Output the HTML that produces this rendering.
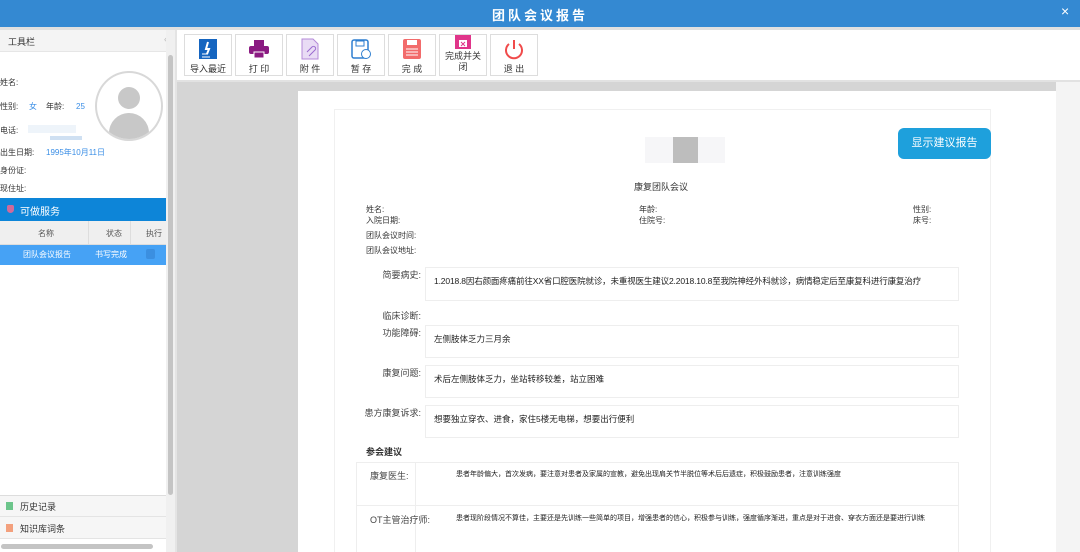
<!DOCTYPE html>
<html><head><meta charset="utf-8"><style>
*{margin:0;padding:0;box-sizing:border-box}
body{width:1080px;height:552px;overflow:hidden;position:relative;background:#fff;font-family:"Liberation Sans","Noto Sans CJK SC",sans-serif;color:#333}
.a{position:absolute;white-space:nowrap}
.s8{font-size:8px}.s9{font-size:9px}.s10{font-size:10px}
.btn{position:absolute;top:34px;width:48px;height:42px;border:1px solid #ddd;background:#fff;font-size:9px;text-align:center;color:#333}
.btn svg{display:block;margin:3px auto 2px}
.box{position:absolute;left:425px;width:534px;border:1px solid #eee;background:#fff;font-size:8.5px;color:#222;padding:7px 8px;white-space:nowrap;overflow:hidden}
.lbl{position:absolute;font-size:9px;color:#444;text-align:right;width:70px}
</style></head><body>
<div class="a" style="left:0;top:0;width:1080px;height:27px;background:#3489d2"></div>
<div class="a" style="left:0;top:5px;width:1080px;text-align:center;color:#fff;font-size:13px;font-weight:bold;letter-spacing:3px">团队会议报告</div>
<div class="a" style="left:1061px;top:3px;color:#fff;font-size:14px">×</div>
<div class="a" style="left:0;top:27px;width:1080px;height:3px;background:#e0e0e0"></div>

<!-- left panel -->
<div class="a" style="left:0;top:30px;width:166px;height:22px;background:#f4f4f4;border-bottom:1px solid #e6e6e6"></div>
<div class="a s9" style="left:8px;top:35px">工具栏</div>
<div class="a s9" style="left:164px;top:34px;color:#bbb">«</div>
<div class="a" style="left:166px;top:30px;width:12px;height:522px;background:#f0f0f0"></div>
<div class="a" style="left:168px;top:55px;width:5px;height:440px;background:#c4c4c4;border-radius:3px"></div>
<div class="a" style="left:175px;top:30px;width:2px;height:522px;background:#e4e4e4"></div>
<div class="a s8" style="left:0;top:77px">姓名:</div>
<div class="a s8" style="left:0;top:101px">性别:</div>
<div class="a s8" style="left:29px;top:101px;color:#3a8ee6">女</div>
<div class="a s8" style="left:46px;top:101px">年龄:</div>
<div class="a s8" style="left:76px;top:102px;color:#3a8ee6">25</div>
<div class="a s8" style="left:0;top:125px">电话:</div>
<div class="a" style="left:28px;top:125px;width:48px;height:8px;background:#eef4fa"></div>
<div class="a" style="left:50px;top:136px;width:32px;height:4px;background:#cfe0f2"></div>
<div class="a s8" style="left:0;top:147px">出生日期:</div>
<div class="a s8" style="left:46px;top:147px;color:#3a8ee6">1995年10月11日</div>
<div class="a s8" style="left:0;top:165px">身份证:</div>
<div class="a s8" style="left:0;top:183px">现住址:</div>
<div class="a" style="left:95px;top:71px;width:68px;height:70px;border-radius:50%;border:2px solid #d8d8d8;overflow:hidden;background:#fff">
 <div class="a" style="left:21px;top:14px;width:22px;height:22px;border-radius:50%;background:#c8c8c8"></div>
 <div class="a" style="left:12px;top:40px;width:40px;height:40px;border-radius:50%;background:#c8c8c8"></div>
</div>
<div class="a" style="left:0;top:198px;width:166px;height:23px;background:#0d85d8"></div>
<div class="a" style="left:7px;top:205px;width:7px;height:8px;background:#d06a9a;border-radius:2px 2px 4px 4px"></div>
<div class="a" style="left:20px;top:203px;color:#fff;font-size:10px">可做服务</div>
<div class="a" style="left:0;top:221px;width:166px;height:24px;background:#efefef;border-bottom:1px solid #ddd"></div>
<div class="a s8" style="left:38px;top:228px;color:#555">名称</div>
<div class="a s8" style="left:106px;top:228px;color:#555">状态</div>
<div class="a s8" style="left:146px;top:228px;color:#555">执行</div>
<div class="a" style="left:88px;top:221px;width:1px;height:44px;background:#ddd"></div>
<div class="a" style="left:130px;top:221px;width:1px;height:44px;background:#ddd"></div>
<div class="a" style="left:0;top:245px;width:166px;height:20px;background:#46a2f5"></div>
<div class="a s8" style="left:23px;top:249px;color:#fff">团队会议报告</div>
<div class="a s8" style="left:95px;top:249px;color:#fff">书写完成</div>
<div class="a" style="left:146px;top:249px;width:9px;height:10px;background:#3b8fe0;border-radius:2px"></div>
<div class="a" style="left:0;top:495px;width:166px;height:22px;background:#f6f6f6;border-top:1px solid #ddd;border-bottom:1px solid #e4e4e4"></div>
<div class="a" style="left:6px;top:502px;width:7px;height:8px;background:#6cc58b"></div>
<div class="a s9" style="left:20px;top:500px">历史记录</div>
<div class="a" style="left:0;top:517px;width:166px;height:22px;background:#f6f6f6;border-bottom:1px solid #e4e4e4"></div>
<div class="a" style="left:6px;top:524px;width:7px;height:8px;background:#f3a07d"></div>
<div class="a s9" style="left:20px;top:522px">知识库词条</div>
<div class="a" style="left:1px;top:544px;width:152px;height:5px;background:#c4c4c4;border-radius:3px"></div>

<!-- toolbar -->
<div class="a" style="left:177px;top:30px;width:903px;height:52px;background:#fff;border-bottom:2px solid #e2e2e2"></div>
<div class="btn" style="left:184px"><svg width="20" height="22"><rect x="1" y="1" width="18" height="20" fill="#1565c0"/><path d="M10 4 L8 11 H11 L9 16" stroke="#fff" stroke-width="2" fill="none"/><path d="M4 16h6M4 19h8" stroke="#fff"/></svg>导入最近</div>
<div class="btn" style="left:235px"><svg width="22" height="22"><rect x="6" y="2" width="10" height="6" fill="#8b1b82"/><rect x="1" y="8" width="20" height="8" rx="2" fill="#8b1b82"/><rect x="6" y="14" width="10" height="6" fill="#8b1b82" stroke="#fff"/></svg>打 印</div>
<div class="btn" style="left:286px"><svg width="20" height="22"><path d="M2 1h11l5 5v15H2z" fill="#e9dcf5" stroke="#b48ad8"/><path d="M7 14l5-5a2 2 0 013 3l-6 6" stroke="#9b6bd0" fill="none"/></svg>附 件</div>
<div class="btn" style="left:337px"><svg width="22" height="22"><rect x="2" y="2" width="16" height="18" rx="2" fill="none" stroke="#2f7fd0" stroke-width="1.5"/><rect x="6" y="3" width="8" height="5" fill="none" stroke="#2f7fd0"/><circle cx="16" cy="16" r="4.5" fill="#fff" stroke="#2f7fd0"/></svg>暂 存</div>
<div class="btn" style="left:388px"><svg width="22" height="22"><rect x="2" y="1" width="18" height="20" rx="2" fill="#f26b6b"/><rect x="6" y="2" width="10" height="5" fill="#fff"/><path d="M5 11h12M5 14h12M5 17h12" stroke="#fff"/></svg>完 成</div>
<div class="btn" style="left:439px;line-height:11px"><svg width="18" height="14" style="margin-top:0"><rect x="1" y="0" width="16" height="14" fill="#e0358a"/><rect x="5" y="5" width="8" height="7" fill="#fff"/><path d="M7 7l4 4M11 7l-4 4" stroke="#e0358a"/></svg>完成并关<br>闭</div>
<div class="btn" style="left:490px"><svg width="22" height="22"><path d="M6 6a8 8 0 1010 0" stroke="#f04b4b" stroke-width="2" fill="none"/><path d="M11 2v9" stroke="#f04b4b" stroke-width="2"/></svg>退 出</div>

<!-- content -->
<div class="a" style="left:177px;top:82px;width:903px;height:470px;background:#d5d5d5"></div>
<div class="a" style="left:298px;top:91px;width:758px;height:461px;background:#fff"></div>
<div class="a" style="left:1056px;top:82px;width:24px;height:470px;background:#f4f4f4"></div>
<div class="a" style="left:334px;top:109px;width:657px;height:443px;border:1px solid #f0f0f0;border-bottom:none"></div>
<div class="a" style="left:645px;top:137px;width:80px;height:26px;background:#f6f6f8"></div>
<div class="a" style="left:673px;top:137px;width:25px;height:26px;background:#bdbdbd"></div>
<div class="a" style="left:898px;top:128px;width:93px;height:31px;background:#1ea0dc;border-radius:6px;color:#fff;font-size:11px;text-align:center;line-height:31px">显示建议报告</div>
<div class="a s9" style="left:634px;top:180px;color:#333">康复团队会议</div>
<div class="a s8" style="left:366px;top:204px">姓名:</div>
<div class="a s8" style="left:639px;top:204px">年龄:</div>
<div class="a s8" style="left:913px;top:204px">性别:</div>
<div class="a s8" style="left:366px;top:215px">入院日期:</div>
<div class="a s8" style="left:639px;top:215px">住院号:</div>
<div class="a s8" style="left:913px;top:215px">床号:</div>
<div class="a s8" style="left:366px;top:230px">团队会议时间:</div>
<div class="a s8" style="left:366px;top:245px">团队会议地址:</div>
<div class="lbl" style="left:351px;top:268px">简要病史:</div>
<div class="box" style="top:267px;height:34px;letter-spacing:-0.15px">1.2018.8因右颜面疼痛前往XX省口腔医院就诊，未重视医生建议2.2018.10.8至我院神经外科就诊，病情稳定后至康复科进行康复治疗</div>
<div class="lbl" style="left:351px;top:309px">临床诊断:</div>
<div class="lbl" style="left:351px;top:326px">功能障碍:</div>
<div class="box" style="top:325px;height:33px">左侧肢体乏力三月余</div>
<div class="lbl" style="left:351px;top:366px">康复问题:</div>
<div class="box" style="top:365px;height:33px">术后左侧肢体乏力，坐站转移较差，站立困难</div>
<div class="lbl" style="left:351px;top:406px">患方康复诉求:</div>
<div class="box" style="top:405px;height:33px">想要独立穿衣、进食，家住5楼无电梯，想要出行便利</div>
<div class="a s9" style="left:366px;top:445px;font-weight:bold;color:#333">参会建议</div>
<div class="a" style="left:356px;top:462px;width:603px;height:90px;border:1px solid #eee;border-bottom:none"></div>
<div class="a" style="left:415px;top:462px;width:1px;height:90px;background:#eee"></div>
<div class="a" style="left:356px;top:505px;width:603px;height:1px;background:#eee"></div>
<div class="a s9" style="left:370px;top:469px;color:#444">康复医生:</div>
<div class="a" style="left:456px;top:469px;font-size:7px;color:#222">患者年龄偏大，首次发病，要注意对患者及家属的宣教，避免出现肩关节半脱位等术后后遗症，积极鼓励患者，注意训练强度</div>
<div class="a s9" style="left:370px;top:513px;color:#444">OT主管治疗师:</div>
<div class="a" style="left:456px;top:513px;font-size:7px;color:#222">患者现阶段情况不算佳，主要还是先训练一些简单的项目，增强患者的信心，积极参与训练，强度循序渐进，重点是对于进食、穿衣方面还是要进行训练</div>
</body></html>
